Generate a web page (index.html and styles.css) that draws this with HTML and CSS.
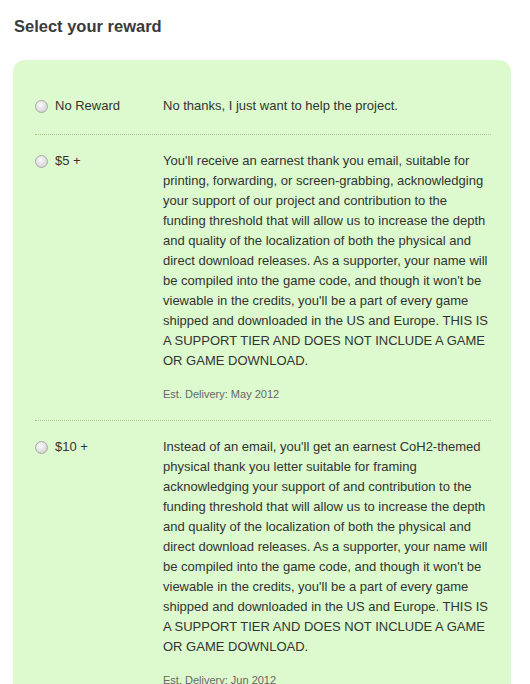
FILE: index.html
```html
<!DOCTYPE html>
<html lang="en">
<head>
  <meta charset="UTF-8">
  <title>Select your reward</title>
  <link rel="stylesheet" href="styles.css">
</head>
<body>

  <h2 class="title">Select your reward</h2>

  <form class="rewards">
    <label class="reward">
      <span class="reward-name">
        <input type="radio" name="reward" value="0">
        No Reward
      </span>
      <span class="reward-desc">No thanks, I just want to help the project.</span>
    </label>

    <label class="reward">
      <span class="reward-name">
        <input type="radio" name="reward" value="5">
        $5 +
      </span>
      <span class="reward-desc">
        You'll receive an earnest thank you email, suitable for printing, forwarding, or screen-grabbing, acknowledging your support of our project and contribution to the funding threshold that will allow us to increase the depth and quality of the localization of both the physical and direct download releases. As a supporter, your name will be compiled into the game code, and though it won't be viewable in the credits, you'll be a part of every game shipped and downloaded in the US and Europe. THIS IS A SUPPORT TIER AND DOES NOT INCLUDE A GAME OR GAME DOWNLOAD.
        <span class="delivery">Est. Delivery: May 2012</span>
      </span>
    </label>

    <label class="reward">
      <span class="reward-name">
        <input type="radio" name="reward" value="10">
        $10 +
      </span>
      <span class="reward-desc">
        Instead of an email, you'll get an earnest CoH2-themed physical thank you letter suitable for framing acknowledging your support of and contribution to the funding threshold that will allow us to increase the depth and quality of the localization of both the physical and direct download releases. As a supporter, your name will be compiled into the game code, and though it won't be viewable in the credits, you'll be a part of every game shipped and downloaded in the US and Europe. THIS IS A SUPPORT TIER AND DOES NOT INCLUDE A GAME OR GAME DOWNLOAD.
        <span class="delivery">Est. Delivery: Jun 2012</span>
      </span>
    </label>
  </form>

</body>
</html>
```

FILE: styles.css
```css
* {
  box-sizing: border-box;
  margin: 0;
  padding: 0;
}

body {
  background: #fff;
  font-family: 'Liberation Sans', Arial, sans-serif;
  color: #333;
}

.title {
  font-size: 16.5px;
  font-weight: bold;
  color: #3a3a3a;
  line-height: 20px;
  padding: 16px 0 0 14px;
}

.rewards {
  margin: 24px 0 0 13px;
  width: 498px;
  min-height: 700px;
  background: #dcfacd;
  border-radius: 12px 12px 0 0;
  padding: 20px 20px 0 22px;
}

.reward {
  display: flex;
  padding: 16px 0 18px;
  border-bottom: 1px dotted #a9c98e;
  font-size: 13px;
  line-height: 20px;
  cursor: pointer;
}

.reward-name {
  width: 128px;
  flex-shrink: 0;
  display: flex;
  align-items: flex-start;
  gap: 7px;
}

.reward-name input[type="radio"] {
  appearance: none;
  -webkit-appearance: none;
  width: 13px;
  height: 13px;
  margin-top: 4px;
  border-radius: 50%;
  border: 1px solid #aaa;
  background: radial-gradient(circle at 40% 35%, #fafafa 0, #e4e4e4 45%, #c8c8c8 100%);
}

.reward-name input[type="radio"]:checked {
  background: radial-gradient(circle, #444 0, #444 30%, #eee 36%, #ccc 100%);
}

.reward-desc {
  width: 328px;
}

.delivery {
  display: block;
  margin-top: 15px;
  font-size: 11px;
  line-height: 16px;
  color: #666;
}
```
